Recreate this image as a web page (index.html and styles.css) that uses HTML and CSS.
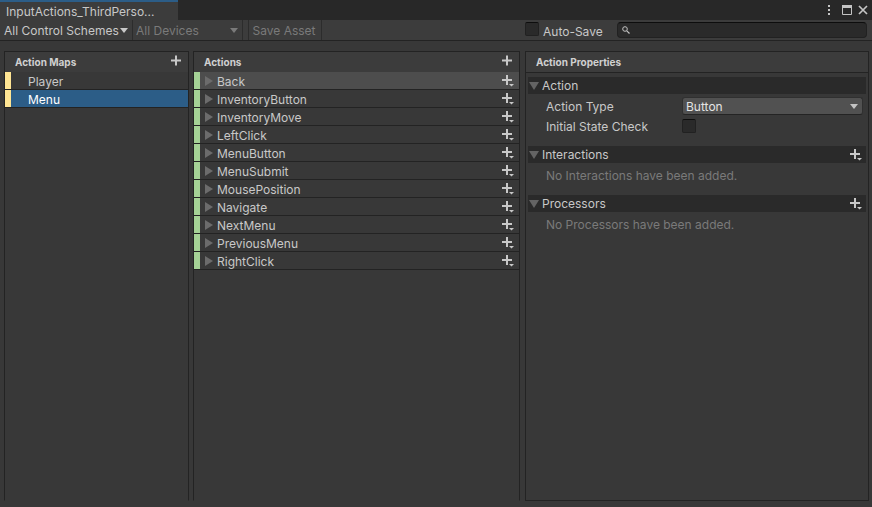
FILE: index.html
```html
<!DOCTYPE html>
<html lang="en">
<head>
<meta charset="utf-8">
<title>InputActions_ThirdPerson</title>
<link rel="stylesheet" href="styles.css">
</head>
<body>
<svg class="defs" aria-hidden="true">
  <symbol id="plus" viewBox="0 0 12 12"><path d="M1 5.5h10M6 .5v10" stroke="#c8c8c8" stroke-width="2" fill="none"/></symbol>
  <symbol id="plus-more" viewBox="0 0 12 12"><path d="M0 5h10M5 0v10" stroke="#c8c8c8" stroke-width="2" fill="none"/><path d="M7 9h5L9.500 11.500z" fill="#c8c8c8"/></symbol>
  <symbol id="fold" viewBox="0 0 8 10"><path d="M0 0v10l8-5z" fill="#6c6c6c"/></symbol>
  <symbol id="open" viewBox="0 0 10 8"><path d="M0 0h10L5 8z" fill="#646464"/></symbol>
  <symbol id="arrow" viewBox="0 0 8 5"><path d="M0 0h8L4 5z" fill="currentColor"/></symbol>
</svg>
<div class="window">
  <header class="titlebar">
    <div class="tab">InputActions_ThirdPerso...</div>
    <div class="window-buttons">
      <button aria-label="More"><svg width="4" height="12" viewBox="0 0 4 12"><path d="M0 1h2v2H0zM0 5h2v2H0zM0 9h2v2H0z" fill="#c4c4c4"/></svg></button>
      <button aria-label="Maximize"><svg width="10" height="10" viewBox="0 0 10 10"><path d="M.5.5h9v9h-9z" fill="none" stroke="#c4c4c4"/><path d="M0 0h10v3H0z" fill="#c4c4c4"/></svg></button>
      <button aria-label="Close"><svg width="10" height="10" viewBox="0 0 10 10"><path d="M1 1l8 8M9 1L1 9" stroke="#c4c4c4" stroke-width="1.7"/></svg></button>
    </div>
  </header>
  <div class="toolbar">
    <div class="picker schemes"><select aria-label="Control scheme"><option>All Control Schemes</option></select><svg class="arrow"><use href="#arrow"/></svg></div>
    <div class="picker devices"><select aria-label="Device" disabled><option>All Devices</option></select><svg class="arrow"><use href="#arrow"/></svg></div>
    <button class="save" disabled>Save Asset</button>
    <label class="autosave"><input type="checkbox" class="check"><span>Auto-Save</span></label>
    <div class="search">
      <svg width="8" height="8" viewBox="0 0 8 8"><circle cx="3" cy="3" r="2.3" fill="none" stroke="#c4c4c4"/><path d="M4.800 4.800l2.700 2.700" stroke="#c4c4c4" stroke-width="1.2"/></svg>
      <input type="search" aria-label="Search">
    </div>
  </div>
  <main class="columns">
    <section class="panel maps">
      <div class="panel-head"><h2>Action Maps</h2><button class="add" aria-label="Add action map"><svg><use href="#plus"/></svg></button></div>
      <ul>
        <li><span>Player</span></li>
        <li class="selected"><span>Menu</span></li>
      </ul>
    </section>
    <section class="panel actions">
      <div class="panel-head"><h2>Actions</h2><button class="add" aria-label="Add action"><svg><use href="#plus"/></svg></button></div>
      <ul>
        <li class="current"><svg class="fold"><use href="#fold"/></svg><span>Back</span><button class="add" aria-label="Add binding"><svg><use href="#plus-more"/></svg></button></li>
        <li><svg class="fold"><use href="#fold"/></svg><span>InventoryButton</span><button class="add" aria-label="Add binding"><svg><use href="#plus-more"/></svg></button></li>
        <li><svg class="fold"><use href="#fold"/></svg><span>InventoryMove</span><button class="add" aria-label="Add binding"><svg><use href="#plus-more"/></svg></button></li>
        <li><svg class="fold"><use href="#fold"/></svg><span>LeftClick</span><button class="add" aria-label="Add binding"><svg><use href="#plus-more"/></svg></button></li>
        <li><svg class="fold"><use href="#fold"/></svg><span>MenuButton</span><button class="add" aria-label="Add binding"><svg><use href="#plus-more"/></svg></button></li>
        <li><svg class="fold"><use href="#fold"/></svg><span>MenuSubmit</span><button class="add" aria-label="Add binding"><svg><use href="#plus-more"/></svg></button></li>
        <li><svg class="fold"><use href="#fold"/></svg><span>MousePosition</span><button class="add" aria-label="Add binding"><svg><use href="#plus-more"/></svg></button></li>
        <li><svg class="fold"><use href="#fold"/></svg><span>Navigate</span><button class="add" aria-label="Add binding"><svg><use href="#plus-more"/></svg></button></li>
        <li><svg class="fold"><use href="#fold"/></svg><span>NextMenu</span><button class="add" aria-label="Add binding"><svg><use href="#plus-more"/></svg></button></li>
        <li><svg class="fold"><use href="#fold"/></svg><span>PreviousMenu</span><button class="add" aria-label="Add binding"><svg><use href="#plus-more"/></svg></button></li>
        <li><svg class="fold"><use href="#fold"/></svg><span>RightClick</span><button class="add" aria-label="Add binding"><svg><use href="#plus-more"/></svg></button></li>
      </ul>
    </section>
    <section class="panel properties">
      <div class="panel-head"><h2>Action Properties</h2></div>
      <div class="groups">
        <section>
          <div class="group-head"><svg class="open"><use href="#open"/></svg><h3>Action</h3></div>
          <div class="fields">
            <label for="type">Action Type</label>
            <div class="picker boxed"><select id="type"><option>Button</option></select><svg class="arrow"><use href="#arrow"/></svg></div>
            <label for="initial">Initial State Check</label>
            <input id="initial" type="checkbox" class="check">
          </div>
        </section>
        <section>
          <div class="group-head"><svg class="open"><use href="#open"/></svg><h3>Interactions</h3><button class="add" aria-label="Add interaction"><svg><use href="#plus-more"/></svg></button></div>
          <p>No Interactions have been added.</p>
        </section>
        <section>
          <div class="group-head"><svg class="open"><use href="#open"/></svg><h3>Processors</h3><button class="add" aria-label="Add processor"><svg><use href="#plus-more"/></svg></button></div>
          <p>No Processors have been added.</p>
        </section>
      </div>
    </section>
  </main>
</div>
</body>
</html>
```
FILE: styles.css
```css
* { box-sizing: border-box; }
body {
  margin: 0;
  background: #383838;
  color: #c8c8c8;
  font: 12px/18px Inter, "Liberation Sans", sans-serif;
}
.defs { display: none; }
svg { display: block; flex: none; }
h2, h3, p, ul { margin: 0; padding: 0; font: inherit; }
button, select, input { font: inherit; color: inherit; margin: 0; }
button { border: 0; padding: 0; background: none; }

.window { display: flex; flex-direction: column; min-height: 100vh; }

.titlebar {
  display: flex;
  justify-content: space-between;
  height: 20px;
  background: #282828;
}
.tab {
  width: 178px;
  padding: 1px 6px 0;
  border-top: 2px solid #2c5d87;
  background: #3c3c3c;
}
.window-buttons {
  display: flex;
  align-items: center;
  gap: 10px;
  padding-right: 4px;
}
.window-buttons button + button + button { margin-left: -4px; }

.toolbar {
  display: flex;
  height: 21px;
  background: #3c3c3c;
  border-bottom: 1px solid #232323;
}
.picker { display: flex; position: relative; }
.picker select {
  appearance: none;
  flex: 1;
  min-width: 0;
  border: 0;
  padding: 2px 4px 0;
  background: none;
  opacity: 1;
}
.arrow {
  position: absolute;
  right: 4px;
  top: 8px;
  width: 8px;
  height: 5px;
  pointer-events: none;
}
.schemes { width: 133px; border-right: 1px solid #2c2c2c; }
.devices { width: 110px; border-right: 1px solid #2c2c2c; color: #7a7a7a; }
.devices select { padding-left: 3px; }
.save {
  width: 74px;
  margin-left: 5px;
  padding: 2px 2px 0 0;
  border: solid #2c2c2c;
  border-width: 0 1px;
  color: #7a7a7a;
}
.autosave {
  display: flex;
  gap: 4px;
  width: 92px;
  margin-left: auto;
  padding-top: 2px;
}
.autosave span { padding-top: 1px; }
.check {
  appearance: none;
  width: 14px;
  height: 14px;
  border: 1px solid #212121;
  border-top-color: #0d0d0d;
  border-radius: 2px;
  background: #2a2a2a;
}
.search {
  display: flex;
  align-items: center;
  gap: 4px;
  width: 250px;
  height: 16px;
  margin: 2px 5px 0 0;
  padding: 0 4px;
  border: 1px solid #212121;
  border-top-color: #0d0d0d;
  border-radius: 4px;
  background: #2a2a2a;
}
.search input {
  appearance: none;
  flex: 1;
  min-width: 0;
  height: 14px;
  padding: 0;
  border: 0;
  background: none;
  outline: 0;
}

.columns {
  flex: 1;
  display: grid;
  grid-template-columns: 185px 327px 1fr;
  column-gap: 4px;
  padding: 10px 3px 6px 4px;
}
.panel { border: 1px solid #232323; border-bottom-color: transparent; }
.properties { margin-left: 1px; border-bottom-color: #232323; }
.panel-head {
  display: flex;
  justify-content: space-between;
  height: 20px;
  padding: 1px 6px 0 10px;
  background: #3c3c3c;
}
.properties .panel-head { height: 21px; border-bottom: 1px solid #232323; }
h2 { font-size: 10px; font-weight: 700; line-height: 18px; color: #d0d0d0; }
.add svg { width: 12px; height: 12px; }
.panel-head .add { height: 15px; }

ul { list-style: none; }
li {
  display: flex;
  align-items: center;
  height: 18px;
  border-bottom: 1px solid #232323;
  box-shadow: inset 6px 0 #a5d296;
}
li span { padding-top: 2px; }
.maps li { padding-left: 23px; box-shadow: inset 6px 0 #ffe593; }
.maps .selected { background: #2c5d87; color: #fff; }
.actions li { gap: 4px; padding: 0 5px 0 11px; }
.actions .current { background: #4d4d4d; }
.fold { width: 8px; height: 10px; }
li .add { margin-left: auto; }

.groups {
  display: flex;
  flex-direction: column;
  gap: 11px;
  padding: 4px 2px;
}
.group-head {
  display: flex;
  align-items: center;
  gap: 3px;
  height: 17px;
  padding: 0 4px 0 1px;
  background: #2a2a2a;
}
.open { width: 10px; height: 8px; }
.group-head .add { margin-left: auto; }
.fields {
  display: grid;
  grid-template-columns: 136px 1fr;
  grid-auto-rows: 18px;
  gap: 2px 0;
  align-items: center;
  padding: 3px 3px 0 18px;
}
.fields label { padding-top: 2px; }
.boxed {
  height: 18px;
  border: 1px solid #303030;
  border-bottom-color: #242424;
  border-radius: 3px;
  background: #515151;
  color: #e4e4e4;
}
.boxed select { padding: 0 3px; }
.boxed .arrow { top: 6px; color: #c4c4c4; }
p { padding: 5px 18px 0; line-height: 16px; color: #7a7a7a; }
```
